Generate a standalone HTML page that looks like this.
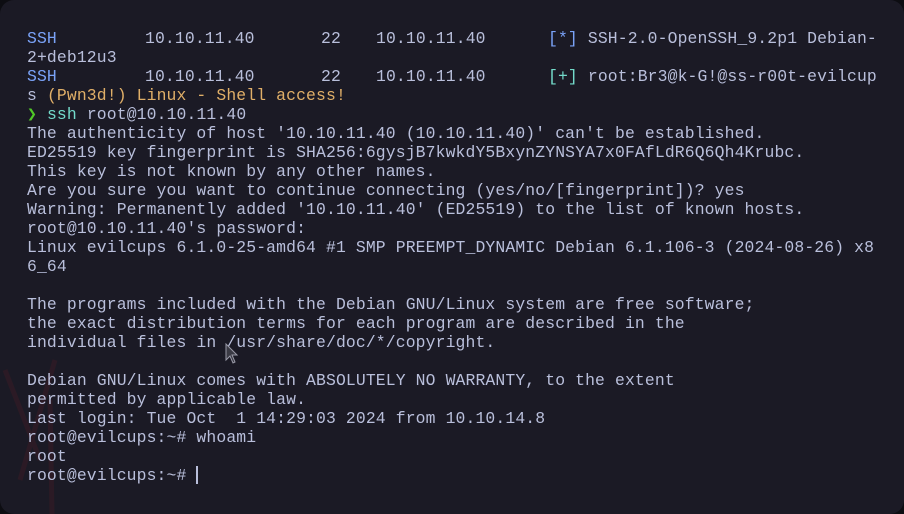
<!DOCTYPE html>
<html><head><meta charset="utf-8"><style>
html,body{margin:0;padding:0;width:904px;height:514px;overflow:hidden;background:#0d0d12;}
.win{position:absolute;left:0;top:0;width:904px;height:514px;border-radius:14px;background:#1b1a25;overflow:hidden;}
.t,.a{font-family:"Liberation Mono",monospace;font-size:16.4px;letter-spacing:0.13px;line-height:19px;color:#b9bfdb;white-space:pre;position:absolute;}
.t{left:27px;top:29px;}
.b{color:#7aa2f7}.g{color:#73daca}.y{color:#e0af68}.gr{color:#50c828}.c{color:#73daca}
.cur{display:inline-block;width:2px;height:18px;background:#b9bfdb;vertical-align:-4px;}
</style></head><body>
<div class="win">
<svg style="position:absolute;left:0;top:340px" width="80" height="174"><path d="M5 30 L40 120 M55 20 L20 140 M50 60 L52 174" stroke="#4a1c24" stroke-width="5" fill="none" opacity="0.35"/></svg>
<div class="a" style="left:27px;top:29px"><span class="b">SSH</span></div>
<div class="a" style="left:145px;top:29px">10.10.11.40</div>
<div class="a" style="left:321px;top:29px">22</div>
<div class="a" style="left:376px;top:29px">10.10.11.40</div>
<div class="a" style="left:548px;top:29px"><span class="b">[*]</span> SSH-2.0-OpenSSH_9.2p1 Debian-</div>
<div class="a" style="left:27px;top:48px">2+deb12u3</div>
<div class="a" style="left:27px;top:67px"><span class="b">SSH</span></div>
<div class="a" style="left:145px;top:67px">10.10.11.40</div>
<div class="a" style="left:321px;top:67px">22</div>
<div class="a" style="left:376px;top:67px">10.10.11.40</div>
<div class="a" style="left:548px;top:67px"><span class="g">[+]</span> root:Br3@k-G!@ss-r00t-evilcup</div>
<div class="a" style="left:27px;top:86px">s <span class="y">(Pwn3d!) Linux - Shell access!</span></div>
<div class="t" style="top:105px"><span class="gr">❯</span> <span class="c">ssh</span> root@10.10.11.40
The authenticity of host '10.10.11.40 (10.10.11.40)' can't be established.
ED25519 key fingerprint is SHA256:6gysjB7kwkdY5BxynZYNSYA7x0FAfLdR6Q6Qh4Krubc.
This key is not known by any other names.
Are you sure you want to continue connecting (yes/no/[fingerprint])? yes
Warning: Permanently added '10.10.11.40' (ED25519) to the list of known hosts.
root@10.10.11.40's password:
Linux evilcups 6.1.0-25-amd64 #1 SMP PREEMPT_DYNAMIC Debian 6.1.106-3 (2024-08-26) x8
6_64

The programs included with the Debian GNU/Linux system are free software;
the exact distribution terms for each program are described in the
individual files in /usr/share/doc/*/copyright.

Debian GNU/Linux comes with ABSOLUTELY NO WARRANTY, to the extent
permitted by applicable law.
Last login: Tue Oct  1 14:29:03 2024 from 10.10.14.8
root@evilcups:~# whoami
root
root@evilcups:~# <span class="cur"></span></div>
<svg style="position:absolute;left:225px;top:343px" width="14" height="22"><path d="M1 1 L1 17 L5 13 L8 20 L10 19 L7 12 L12 12 Z" fill="#3a3a44" stroke="#9a9aa8" stroke-width="1"/></svg>
</div>
</body></html>
